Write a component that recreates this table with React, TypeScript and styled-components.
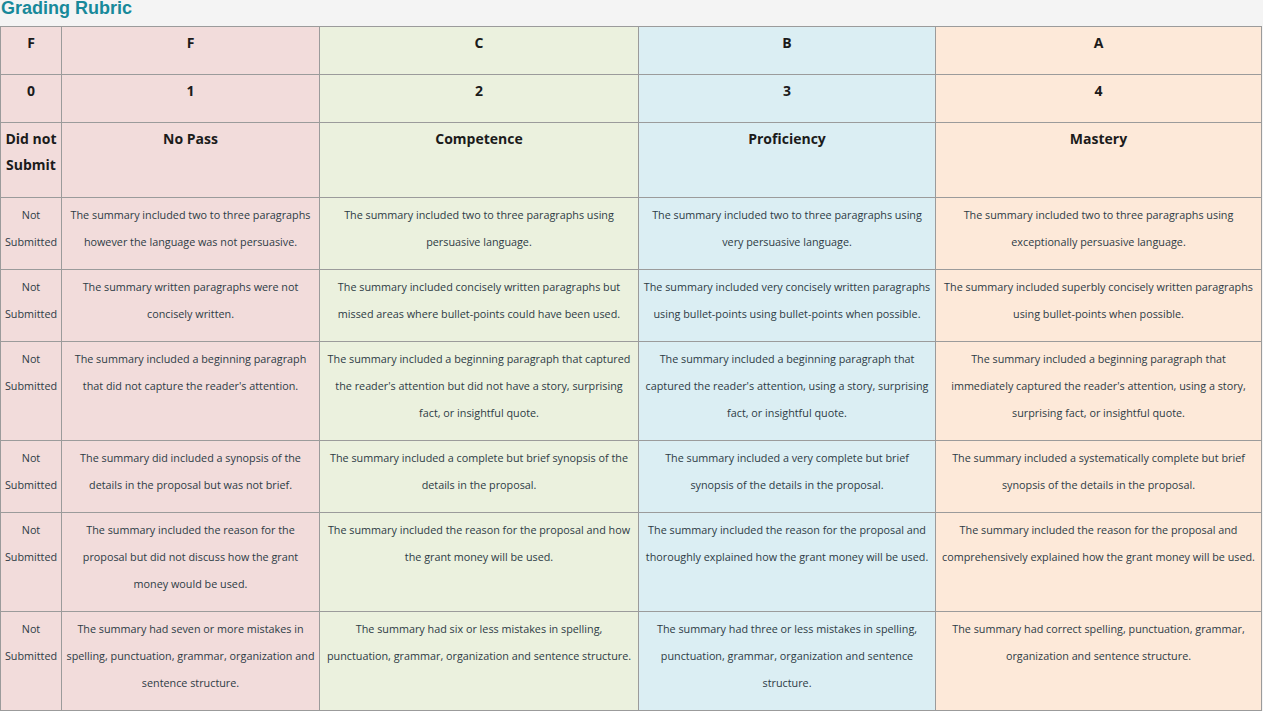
import React from 'react';
import styled, { createGlobalStyle } from 'styled-components';

const GlobalStyle = createGlobalStyle`
  html, body {
    margin: 0;
    padding: 0;
    background: #f4f4f4;
  }
`;

const Page = styled.div`
  padding: 0;
`;

const Title = styled.h2`
  font-family: "Liberation Sans", Arial, sans-serif;
  font-size: 18px;
  font-weight: bold;
  color: #17899a;
  margin: 0;
  padding: 0 0 0 1px;
  height: 26px;
  line-height: 17px;
`;

const Table = styled.table`
  border-collapse: collapse;
  table-layout: fixed;
  width: 1261px;
  font-family: "Open Sans", "Noto Sans", sans-serif;
  color: #2d3b45;
`;

type Tone = 'f' | 'c' | 'b' | 'a';

const tones: Record<Tone, string> = {
  f: '#f2dcdb',
  c: '#ebf1de',
  b: '#dbeef3',
  a: '#fde9d9',
};

const Cell = styled.td<{ $tone: Tone }>`
  background: ${(p) => tones[p.$tone]};
  border: 1px solid #9b9b9b;
  padding: 3px 4px 14px;
  text-align: center;
  vertical-align: top;
  font-size: 10.8px;
  font-weight: 400;
  line-height: 27px;
  color: #2d3b45;

  &:first-child {
    padding-left: 2px;
    padding-right: 2px;
  }
`;

const HeadCell = styled(Cell)<{ $tall?: boolean }>`
  padding: 3px 4px ${(p) => (p.$tall ? '19px' : '18px')};
  font-size: 14px;
  font-weight: 700;
  line-height: 26px;
  color: #1b1b1b;
`;

const colTones: Tone[] = ['f', 'f', 'c', 'b', 'a'];
const widths = [61, 258, 319, 297, 326];

const headRows = [
  ['F', 'F', 'C', 'B', 'A'],
  ['0', '1', '2', '3', '4'],
  ['Did not Submit', 'No Pass', 'Competence', 'Proficiency', 'Mastery'],
];

const bodyRows = [
  [
    'The summary included two to three paragraphs however the language was not persuasive.',
    'The summary included two to three paragraphs using persuasive language.',
    'The summary included two to three paragraphs using very persuasive language.',
    'The summary included two to three paragraphs using exceptionally persuasive language.',
  ],
  [
    'The summary written paragraphs were not concisely written.',
    'The summary included concisely written paragraphs but missed areas where bullet-points could have been used.',
    'The summary included very concisely written paragraphs using bullet-points using bullet-points when possible.',
    'The summary included superbly concisely written paragraphs using bullet-points when possible.',
  ],
  [
    "The summary included a beginning paragraph that did not capture the reader's attention.",
    "The summary included a beginning paragraph that captured the reader's attention but did not have a story, surprising fact, or insightful quote.",
    "The summary included a beginning paragraph that captured the reader's attention, using a story, surprising fact, or insightful quote.",
    "The summary included a beginning paragraph that immediately captured the reader's attention, using a story, surprising fact, or insightful quote.",
  ],
  [
    'The summary did included a synopsis of the details in the proposal but was not brief.',
    'The summary included a complete but brief synopsis of the details in the proposal.',
    'The summary included a very complete but brief synopsis of the details in the proposal.',
    'The summary included a systematically complete but brief synopsis of the details in the proposal.',
  ],
  [
    'The summary included the reason for the proposal but did not discuss how the grant money would be used.',
    'The summary included the reason for the proposal and how the grant money will be used.',
    'The summary included the reason for the proposal and thoroughly explained how the grant money will be used.',
    'The summary included the reason for the proposal and comprehensively explained how the grant money will be used.',
  ],
  [
    'The summary had seven or more mistakes in spelling, punctuation, grammar, organization and sentence structure.',
    'The summary had six or less mistakes in spelling, punctuation, grammar, organization and sentence structure.',
    'The summary had three or less mistakes in spelling, punctuation, grammar, organization and sentence structure.',
    'The summary had correct spelling, punctuation, grammar, organization and sentence structure.',
  ],
];

export default function App() {
  return (
    <Page>
      <GlobalStyle />
      <Title>Grading Rubric</Title>
      <Table>
        <colgroup>
          {widths.map((w, i) => (
            <col key={i} style={{ width: w }} />
          ))}
        </colgroup>
        <tbody>
          {headRows.map((row, r) => (
            <tr key={`h${r}`}>
              {row.map((text, i) => (
                <HeadCell key={i} $tone={colTones[i]} $tall={r === 2}>
                  {text}
                </HeadCell>
              ))}
            </tr>
          ))}
          {bodyRows.map((row, r) => (
            <tr key={`b${r}`}>
              <Cell $tone="f">Not Submitted</Cell>
              {row.map((text, i) => (
                <Cell key={i} $tone={colTones[i + 1]}>
                  {text}
                </Cell>
              ))}
            </tr>
          ))}
        </tbody>
      </Table>
    </Page>
  );
}
